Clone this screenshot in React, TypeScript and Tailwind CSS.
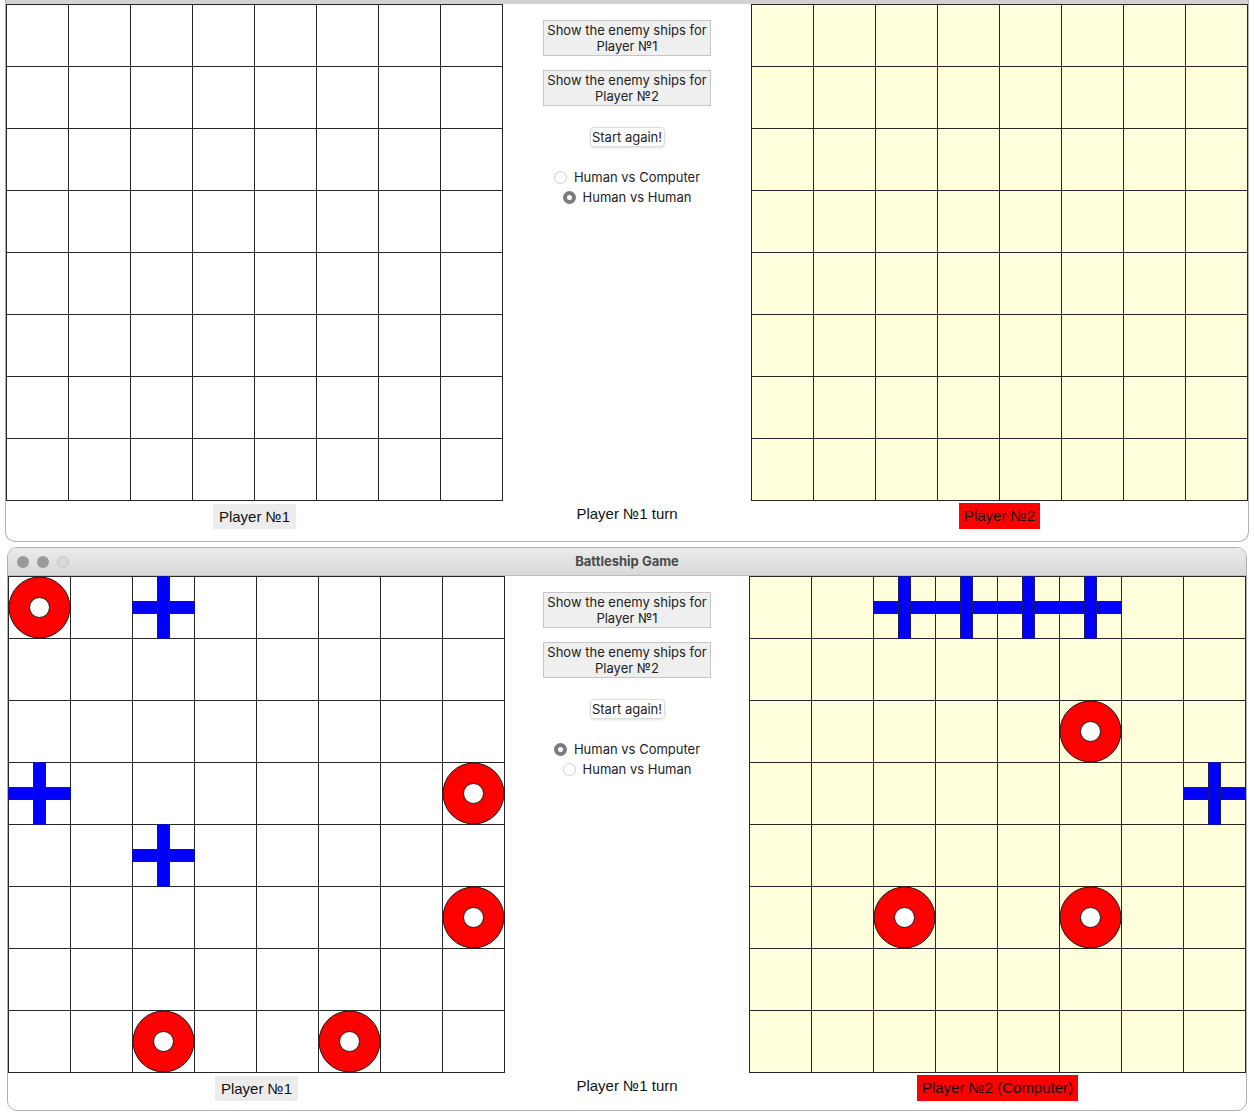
import React from "react"

type Mark = "hit" | "ship" | null

const FONT = { fontFamily: "'Liberation Sans', Arial, sans-serif" }
const UI = { fontFamily: "Inter, 'Open Sans', sans-serif" }

function makeBoard(entries: [number, number, Mark][]): Mark[] {
  const cells: Mark[] = Array(64).fill(null)
  entries.forEach(([r, c, m]) => {
    cells[r * 8 + c] = m
  })
  return cells
}

const leftMarks = makeBoard([
  [0, 0, "hit"],
  [0, 2, "ship"],
  [3, 0, "ship"],
  [3, 7, "hit"],
  [4, 2, "ship"],
  [5, 7, "hit"],
  [7, 2, "hit"],
  [7, 5, "hit"],
])

const rightMarks = makeBoard([
  [0, 2, "ship"],
  [0, 3, "ship"],
  [0, 4, "ship"],
  [0, 5, "ship"],
  [2, 5, "hit"],
  [3, 7, "ship"],
  [5, 2, "hit"],
  [5, 5, "hit"],
])

const empty = makeBoard([])

function Marker({ kind }: { kind: Mark }) {
  if (!kind) return null
  return (
    <svg className="absolute -left-px -top-px z-10" width="63" height="63" viewBox="0 0 63 63">
      {kind === "hit" ? (
        <>
          <circle cx="31.5" cy="31.5" r="30.5" fill="#ff0000" stroke="#1a1a1a" strokeWidth="1" />
          <circle cx="31.5" cy="31.5" r="10" fill="#ffffff" stroke="#1a1a1a" strokeWidth="1" />
        </>
      ) : (
        <>
          <rect x="0" y="25.5" width="63" height="12" fill="#0000ff" stroke="#1a1a66" strokeWidth="1" />
          <rect x="25.5" y="0" width="12" height="63" fill="#0000ff" stroke="#1a1a66" strokeWidth="1" />
        </>
      )}
    </svg>
  )
}

function Board({ cells, yellow }: { cells: Mark[]; yellow?: boolean }) {
  return (
    <div className="grid w-[497px] shrink-0 grid-cols-8 gap-px border border-[#262626] bg-[#262626]">
      {cells.map((m, i) => (
        <div key={i} className={`relative h-[61px] ${yellow ? "bg-[#ffffde]" : "bg-white"}`}>
          <Marker kind={m} />
        </div>
      ))}
    </div>
  )
}

function Radio({ checked, label }: { checked: boolean; label: string }) {
  return (
    <div className="flex items-center justify-center gap-[7px] text-[13px] leading-[20px] text-[#222]" style={UI}>
      {checked ? (
        <span className="flex h-[13px] w-[13px] items-center justify-center rounded-full bg-[#7c7c7c]">
          <span className="h-[5px] w-[5px] rounded-full bg-white" />
        </span>
      ) : (
        <span className="h-[13px] w-[13px] rounded-full border border-[#cfcfcf] bg-white" />
      )}
      <span>{label}</span>
    </div>
  )
}

function Controls({ vsComputer }: { vsComputer: boolean }) {
  return (
    <div className="flex flex-1 flex-col items-center pt-[16px]">
      {[1, 2].map((n) => (
        <button
          key={n}
          className="mb-[14px] h-[36px] w-[168px] border border-[#c6c6c6] bg-[#efefef] text-[13px] leading-[16px] text-[#222]"
          style={UI}
        >
          Show the enemy ships for
          <br />
          Player №{n}
        </button>
      ))}
      <button
        className="mt-[7px] h-[20px] w-[75px] rounded-[4px] border border-[#dcdcdc] bg-white text-[13px] leading-[18px] text-[#222] shadow-sm"
        style={UI}
      >
        Start again!
      </button>
      <div className="mt-[20px] flex flex-col">
        <Radio checked={vsComputer} label="Human vs Computer" />
        <Radio checked={!vsComputer} label="Human vs Human" />
      </div>
    </div>
  )
}

function Labels({ right, h }: { right: string; h: string }) {
  return (
    <div className={`flex ${h} text-[15px] text-[#111]`} style={FONT}>
      <div className="flex w-[497px] items-start justify-center pt-[3px]">
        <span className="bg-[#ececec] px-[6px] leading-[25px]">Player №1</span>
      </div>
      <div className="flex flex-1 items-start justify-center pt-[4px] text-[15px] leading-[18px]">Player №1 turn</div>
      <div className="flex w-[497px] items-start justify-center pt-[2px]">
        <span className="bg-[#ff0000] px-[5px] leading-[26px]">{right}</span>
      </div>
    </div>
  )
}

export default function App() {
  return (
    <div className="flex h-[1112px] w-[1254px] flex-col overflow-hidden bg-white">
      <div className="ml-[5px] flex h-[542px] w-[1244px] flex-col rounded-b-[10px] border-x border-b border-[#b0b0b0]">
        <div className="h-[4px] bg-[#d2d2d2]" />
        <div className="flex">
          <Board cells={empty} />
          <Controls vsComputer={false} />
          <Board cells={empty} yellow />
        </div>
        <Labels right="Player №2" h="h-[38px]" />
      </div>

      <div className="ml-[7px] mt-[5px] flex h-[564px] w-[1240px] flex-col overflow-hidden rounded-[10px] border border-[#b0b0b0]">
        <div className="relative flex h-[28px] shrink-0 items-center justify-center border-b border-[#bdbdbd] bg-gradient-to-b from-[#ebebeb] to-[#d9d9d9]">
          <div className="absolute left-[9px] top-[8px] flex gap-[8px]">
            <span className="h-[12px] w-[12px] rounded-full bg-[#9a9a9a]" />
            <span className="h-[12px] w-[12px] rounded-full bg-[#9a9a9a]" />
            <span className="h-[12px] w-[12px] rounded-full border border-[#c4c4c4] bg-[#dadada]" />
          </div>
          <span className="text-[13px] font-bold text-[#4a4a4a]" style={UI}>
            Battleship Game
          </span>
        </div>
        <div className="flex">
          <Board cells={leftMarks} />
          <Controls vsComputer />
          <Board cells={rightMarks} yellow />
        </div>
        <Labels right="Player №2 (Computer)" h="h-[37px]" />
      </div>
    </div>
  )
}
